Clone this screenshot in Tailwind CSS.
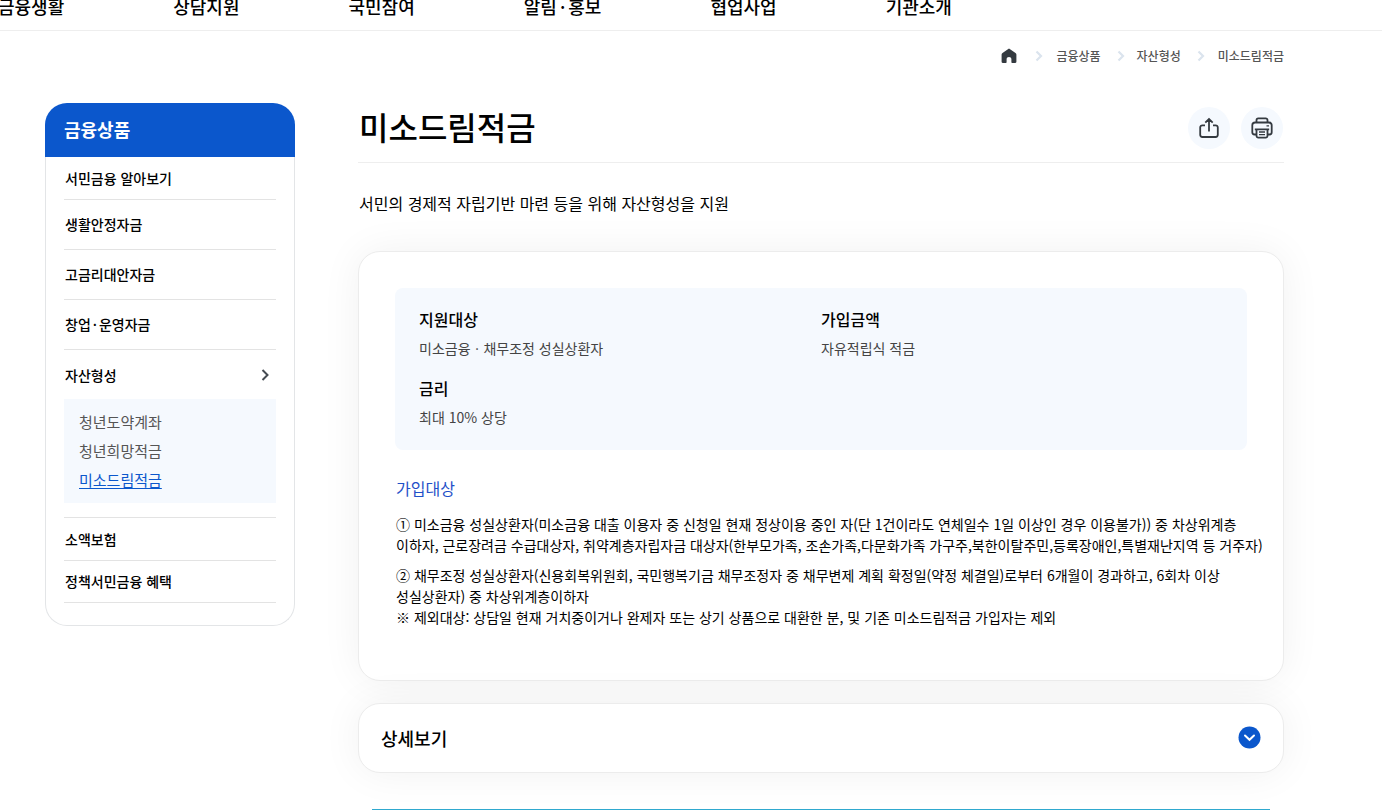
<!DOCTYPE html>
<html lang="ko">
<head>
    <meta charset="UTF-8">
    <meta name="viewport" content="width=device-width, initial-scale=1.0">
    <title>미소드림적금</title>
    <script src="https://cdn.jsdelivr.net/npm/@tailwindcss/browser@4"></script>
</head>
<body class="bg-white text-black font-['Noto_Sans_CJK_KR',sans-serif] break-keep h-screen overflow-hidden">

    <!-- Main menu -->
    <header class="overflow-hidden border-b border-[#eeeeee]">
        <nav class="-mt-2 -ml-[2px] pb-[10px] flex gap-[109px] text-[18px] leading-[28px] font-medium whitespace-nowrap">
            <a href="#">금융생활</a>
            <a href="#">상담지원</a>
            <a href="#">국민참여</a>
            <a href="#">알림<span class="mx-[3px]">·</span>홍보</a>
            <a href="#">협업사업</a>
            <a href="#">기관소개</a>
        </nav>
    </header>

    <div class="pl-[45px] pr-[98px]">

        <!-- Breadcrumb -->
        <nav class="h-[50px] flex items-center justify-end text-[12px] leading-[18px] text-[#555555] font-medium">
            <a href="#" aria-label="홈">
                <svg class="w-4 h-4" viewBox="0 0 16 16" fill="#343a40"><path d="M8 .5 1.500 4.900C.9 5.300.6 5.800.6 6.500v7.300c0 .7.4 1.100 1.100 1.100h3.200c.4 0 .7-.3.7-.7v-3c0-1.500 1-2.300 2.400-2.300s2.400.8 2.400 2.300v3c0 .4.3.7.7.7h3.200c.7 0 1.100-.4 1.100-1.100V6.500c0-.7-.3-1.200-.9-1.600z"/></svg>
            </a>
            <svg class="w-2 h-3 ml-[18px] mr-[13px]" viewBox="0 0 8 12" fill="none" stroke="#dbe4ee" stroke-width="2.200"><path d="m1.500 1.500 4.500 4.500-4.500 4.500"/></svg>
            <a href="#">금융상품</a>
            <svg class="w-2 h-3 ml-4 mr-3" viewBox="0 0 8 12" fill="none" stroke="#dbe4ee" stroke-width="2.200"><path d="m1.500 1.500 4.500 4.500-4.500 4.500"/></svg>
            <a href="#">자산형성</a>
            <svg class="w-2 h-3 ml-4 mr-[13px]" viewBox="0 0 8 12" fill="none" stroke="#dbe4ee" stroke-width="2.200"><path d="m1.500 1.500 4.500 4.500-4.500 4.500"/></svg>
            <a href="#">미소드림적금</a>
        </nav>

        <div class="mt-[22px] flex items-start gap-[63px]">

            <!-- Side menu -->
            <aside class="w-[250px] shrink-0">
                <h2 class="h-[54px] rounded-t-[22px] bg-[#0b57cc] px-[19px] pb-[2px] flex items-center text-[18px] font-bold text-white">금융상품</h2>
                <ul class="border border-t-0 border-[#e3e5e7] rounded-b-[22px] px-[18px] pb-[22px] text-[14px] leading-[20px] font-medium">
                    <li class="h-[43px] border-b border-[#e3e3e3] pb-px pl-px flex items-center"><a href="#">서민금융 알아보기</a></li>
                    <li class="h-[50px] border-b border-[#e3e3e3] pb-px pl-px flex items-center"><a href="#">생활안정자금</a></li>
                    <li class="h-[50px] border-b border-[#e3e3e3] pb-px pl-px flex items-center"><a href="#">고금리대안자금</a></li>
                    <li class="h-[50px] border-b border-[#e3e3e3] pb-px pl-px flex items-center"><a href="#">창업<span class="mx-[2px]">·</span>운영자금</a></li>
                    <li class="border-b border-[#e3e3e3] pb-[14px]">
                        <a href="#" class="h-[49px] pl-px flex items-center justify-between pr-[6px]">
                            자산형성
                            <svg class="w-[10px] h-3" viewBox="0 0 10 12" fill="none" stroke="#454b52" stroke-width="2"><path d="m2.500 1 5 5-5 5"/></svg>
                        </a>
                        <ul class="bg-[#f5f9fe] h-[104px] px-[15px] py-2 text-[15px] leading-[29px] font-normal text-[#555555]">
                            <li><a href="#">청년도약계좌</a></li>
                            <li><a href="#">청년희망적금</a></li>
                            <li><a href="#" class="text-[#0b57cc] underline underline-offset-2">미소드림적금</a></li>
                        </ul>
                    </li>
                    <li class="h-[43px] border-b border-[#e3e3e3] pb-px pl-px flex items-center"><a href="#">소액보험</a></li>
                    <li class="h-[42px] border-b border-[#e3e3e3] pb-px pl-px flex items-center"><a href="#">정책서민금융 혜택</a></li>
                </ul>
            </aside>

            <!-- Content -->
            <main class="flex-1 min-w-0">
                <div class="h-[60px] border-b border-[#eeeeee] flex items-start justify-between">
                    <h1 class="pl-px text-[32px] leading-[46px] font-medium">미소드림적금</h1>
                    <div class="mt-1 pr-px flex gap-[11px]">
                        <button type="button" aria-label="공유" class="w-[42px] h-[42px] rounded-full bg-[#f5f9fe] flex items-center justify-center">
                            <svg class="w-[22px] h-[22px]" viewBox="0 0 22 22" fill="none" stroke="#343a40" stroke-width="1.800"><path d="M11 14.500V2.500M7.300 5.700 11 2l3.700 3.700M7 8.300H4.400a2.200 2.200 0 0 0-2.200 2.200v7.300a2.200 2.200 0 0 0 2.200 2.200h13.200a2.200 2.200 0 0 0 2.200-2.200v-7.300a2.200 2.200 0 0 0-2.200-2.200H15"/></svg>
                        </button>
                        <button type="button" aria-label="인쇄" class="w-[42px] h-[42px] rounded-full bg-[#f5f9fe] flex items-center justify-center">
                            <svg class="w-[22px] h-[22px]" viewBox="0 0 22 22" fill="none" stroke="#343a40" stroke-width="1.800"><path d="M5.500 5.500V3.200A1.800 1.800 0 0 1 7.300 1.400h7.400a1.800 1.800 0 0 1 1.800 1.800v2.300M5 17.500H3.500A2.200 2.200 0 0 1 1.300 15.300V8.300a2.800 2.800 0 0 1 2.800-2.800h13.800a2.800 2.800 0 0 1 2.800 2.800v7a2.200 2.200 0 0 1-2.200 2.200H17M3.800 12.300h14.400M5.500 12.300v6.500a1.800 1.800 0 0 0 1.800 1.800h7.400a1.800 1.800 0 0 0 1.800-1.800v-6.500"/><path stroke-width="1.400" d="M8 15h6M8 17.600h6M15.500 8.900h2.500"/></svg>
                        </button>
                    </div>
                </div>

                <p class="mt-7 pl-px text-[16px] leading-[24px]">서민의 경제적 자립기반 마련 등을 위해 자산형성을 지원</p>

                <section class="mt-9 min-h-[430px] rounded-[22px] border border-[#ececec] bg-white shadow-[0_0_40px_rgba(0,0,0,0.06)] p-9">
                    <dl class="rounded-lg bg-[#f5f9fe] px-6 pt-[19px] pb-[22px] grid grid-cols-2 gap-y-[17px] text-[14px] leading-[22px] text-[#444444]">
                        <div>
                            <dt class="text-[16px] leading-[24px] font-medium text-black">지원대상</dt>
                            <dd class="mt-[6px]">미소금융ㆍ채무조정 성실상환자</dd>
                        </div>
                        <div>
                            <dt class="text-[16px] leading-[24px] font-medium text-black">가입금액</dt>
                            <dd class="mt-[6px]">자유적립식 적금</dd>
                        </div>
                        <div>
                            <dt class="text-[16px] leading-[24px] font-medium text-black">금리</dt>
                            <dd class="mt-[6px]">최대 10% 상당</dd>
                        </div>
                    </dl>

                    <h3 class="mt-[26px] pl-px text-[16px] leading-[24px] text-[#1f50c8]">가입대상</h3>
                    <div class="mt-[14px] -mr-8 pl-px text-[14px] leading-[21px]">
                        <p>① 미소금융 성실상환자(미소금융 대출 이용자 중 신청일 현재 정상이용 중인 자(단 1건이라도 연체일수 1일 이상인 경우 이용불가)) 중 차상위계층<br>이하자, 근로장려금 수급대상자, 취약계층자립자금 대상자(한부모가족, 조손가족,다문화가족 가구주,북한이탈주민,등록장애인,특별재난지역 등 거주자)</p>
                        <p class="mt-[9px]">② 채무조정 성실상환자(신용회복위원회, 국민행복기금 채무조정자 중 채무변제 계획 확정일(약정 체결일)로부터 6개월이 경과하고, 6회차 이상<br>성실상환자) 중 차상위계층이하자<br>※ 제외대상: 상담일 현재 거치중이거나 완제자 또는 상기 상품으로 대환한 분, 및 기존 미소드림적금 가입자는 제외</p>
                    </div>
                </section>

                <button type="button" class="mt-[22px] w-full h-[70px] rounded-[22px] border border-[#ececec] bg-white shadow-[0_0_40px_rgba(0,0,0,0.06)] px-[22px] flex items-center justify-between text-[18px] font-medium">
                    상세보기
                    <svg class="w-6 h-6" viewBox="0 0 24 24" fill="none"><circle cx="12.500" cy="11.500" r="11" fill="#0b57cc"/><path d="m8 9.500 4.500 4.300L17 9.500" stroke="#fff" stroke-width="2" stroke-linecap="round"/></svg>
                </button>

                <!-- Apply bar -->
                <div class="mt-9 mx-[14px] h-px bg-[#2fa9cf]"></div>
            </main>
        </div>
    </div>

</body>
</html>
